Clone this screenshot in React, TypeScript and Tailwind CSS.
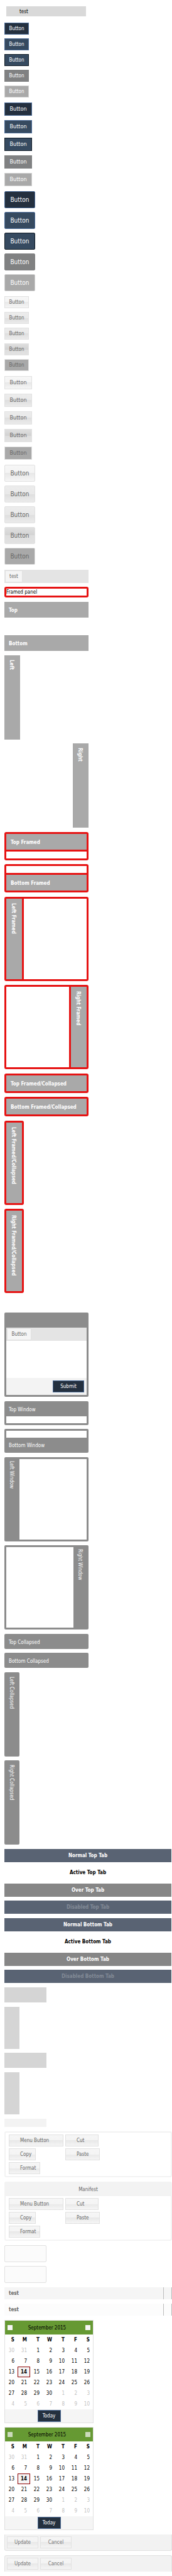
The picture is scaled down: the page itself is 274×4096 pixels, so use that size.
import type { ReactNode } from "react";
import clsx from "clsx";

type Size = "small" | "medium" | "large";

const sizes: Record<Size, string> = {
  small: "h-[19px] w-[39px] text-[8px]",
  medium: "h-[21px] w-[44px] text-[9px]",
  large: "h-[27px] w-[49px] rounded-[2px] text-[10px]",
};

const primary = "border border-[#4a6a96] bg-[#24303f] text-white";

const darkStates = [
  primary,
  "border border-[#4a6a96] bg-[#364a60] text-white",
  "border border-[#0f1a24] bg-[#364a60] text-white",
  "border border-[#808182] bg-[#808182] text-white",
  "border border-[#cfcfcf] bg-[#a9a9a9] text-white",
];

const light =
  "border border-[#e1e1e1] bg-[linear-gradient(#f6f6f6,#f4f4f4_50%,#e8e8e8_50%,#f5f5f5)] text-[#666]";
const lightOver =
  "border border-[#e1e1e1] bg-[linear-gradient(#ececec,#e9e9e9_50%,#dedede_50%,#ebebeb)] text-[#666]";

const lightStates = [
  light,
  lightOver,
  lightOver,
  "border border-[#e1e1e1] bg-[linear-gradient(#dfdfdf,#d2d2d2_50%,#dedede_50%,#e2e2e2)] text-[#666]",
  "border border-[#e1e1e1] bg-[#a9a9a9] text-[#666]",
];

function ButtonGroup({ size, states }: { size: Size; states: string[] }) {
  return (
    <div className={clsx("flex flex-col items-start", size === "medium" ? "gap-[7px]" : "gap-1.5")}>
      {states.map((state, i) => (
        <button
          key={i}
          type="button"
          disabled={i === states.length - 1}
          className={clsx("flex items-center justify-center", sizes[size], state)}
        >
          Button
        </button>
      ))}
    </div>
  );
}

function Pair({ children }: { children?: ReactNode }) {
  return <div className="flex flex-col items-start gap-1.5">{children}</div>;
}

function Toolbar({ label, width }: { label: string; width: string }) {
  return (
    <div className="flex h-[21px] items-center bg-[#e4e4e4] pl-px">
      <button
        type="button"
        className={clsx("h-[19px] border border-[#e1e1e1] bg-[#f5f5f5] text-[8px] text-[#666]", width)}
      >
        {label}
      </button>
    </div>
  );
}

function HeaderBar({ title, className }: { title: string; className: string }) {
  return <div className={clsx("flex items-center text-[8px] text-white", className)}>{title}</div>;
}

function SideHeader({ title, className }: { title: string; className: string }) {
  return (
    <div className={clsx("flex flex-col justify-center text-[8px] text-white [writing-mode:vertical-rl]", className)}>
      {title}
    </div>
  );
}

const frame = "rounded-[3px] border-[3px] border-[#e61313] bg-[#e61313]";
const paneTop = "h-[25px] bg-[#a9a9a9] pt-px pl-[7px] font-bold";
const paneSide = "w-[25px] bg-[#a9a9a9] pt-[7px] pr-0.5 font-bold";

function Tab({ label, tone }: { label: string; tone: string }) {
  return (
    <button
      type="button"
      role="tab"
      className={clsx("h-[21px] w-full text-center text-[8px] font-bold", tone)}
    >
      {label}
    </button>
  );
}

const tabTones: [string, string][] = [
  ["Normal", "bg-[#596373] text-white"],
  ["Active", "bg-white text-black"],
  ["Over", "bg-[#868686] text-white"],
  ["Disabled", "bg-[#596373] text-[#838b97]"],
];

function TabPair({ side, from }: { side: string; from: number }) {
  return (
    <div role="tablist" className="flex flex-col gap-1.5 pr-px">
      {tabTones.slice(from, from + 2).map(([name, tone]) => (
        <Tab key={name} label={`${name} ${side} Tab`} tone={tone} />
      ))}
    </div>
  );
}

const menuItems: [string, string][] = [
  ["Menu Button", "w-[87px]"],
  ["Cut", "w-[53px]"],
  ["Copy", "w-[43px]"],
  ["Paste", "w-[55px]"],
  ["Format", "w-[50px]"],
];

function MenuGroup({ title }: { title?: string }) {
  return (
    <div className="rounded-[3px] border-2 border-[#f3f3f3]">
      {title && (
        <div className="flex h-[21px] items-center justify-center bg-[#f3f3f3] text-[8px] text-[#666]">{title}</div>
      )}
      <div className="grid grid-cols-[87px_1fr] gap-[3px] py-[3px] pl-[5px]">
        {menuItems.map(([label, width]) => (
          <button
            key={label}
            type="button"
            className={clsx("h-[19px] pl-[17px] text-left text-[8px]", light, width)}
          >
            {label}
          </button>
        ))}
      </div>
    </div>
  );
}

function GridHeader({ tone }: { tone: string }) {
  return (
    <div className={clsx("flex h-[19px] border-r border-[#bcbcbc] text-[8px] font-bold text-[#666]", tone)}>
      <div className="flex flex-1 items-center pl-[7px]">test</div>
      <div className="w-[13px] border-l border-[#bcbcbc]" />
    </div>
  );
}

const weekdays = ["S", "M", "T", "W", "T", "F", "S"];
const weeks = Array.from({ length: 6 }, (_, w) =>
  Array.from({ length: 7 }, (_, d) => {
    const n = w * 7 + d - 1;
    if (n < 1) return { day: n + 31, out: true };
    if (n > 30) return { day: n - 30, out: true };
    return { day: n, out: false };
  }),
);

function Calendar({ navTone }: { navTone: string }) {
  return (
    <div className="w-[142px] border border-[#e1e1e1] text-[8px]">
      <div className="flex h-[22px] items-center bg-[#669933] pr-1 pl-1">
        <button type="button" aria-label="Previous month" className={clsx("size-2", navTone)} />
        <button type="button" className="flex-1 pr-1.5 text-center text-black">
          September 2015
        </button>
        <button type="button" aria-label="Next month" className={clsx("size-2", navTone)} />
      </div>
      <table className="w-full table-fixed border-collapse text-right">
        <thead>
          <tr className="h-[17px]">
            {weekdays.map((d, i) => (
              <th key={i} className="p-0 pr-[5px] text-right font-bold">
                {d}
              </th>
            ))}
          </tr>
        </thead>
        <tbody>
          {weeks.map((week, w) => (
            <tr key={w} className="h-[17px]">
              {week.map(({ day, out }, d) => {
                const selected = day === 14;
                return (
                  <td key={d} className={clsx("p-0", out && "text-[#bfbfbf]")}>
                    <div
                      className={clsx(
                        "flex h-[17px] items-center justify-end",
                        selected ? "border border-[#8b0000] bg-[#f5f5f5] pr-1 font-bold" : "pr-[5px]",
                      )}
                    >
                      {day}
                    </div>
                  </td>
                );
              })}
            </tr>
          ))}
        </tbody>
      </table>
      <div className="flex h-[21px] items-center justify-center bg-[#f5f5f5]">
        <button type="button" className={clsx("h-[19px] w-[37px]", primary)}>
          Today
        </button>
      </div>
    </div>
  );
}

function EditorButtons({ className }: { className: string }) {
  return (
    <div className={clsx("flex h-[26px] gap-[3px] border-x border-[#e1e1e1] bg-[#f2f2f2] pt-[3px] pl-[3px]", className)}>
      {["Update", "Cancel"].map((label) => (
        <button key={label} type="button" className={clsx("h-[19px] w-[50px] text-[8px] opacity-90", light)}>
          {label}
        </button>
      ))}
    </div>
  );
}

export default function App() {
  return (
    <main className="bg-white pt-[10px] pb-[7px] pl-[7px] font-['DejaVu_Sans_Condensed','DejaVu_Sans',Tahoma,sans-serif] leading-[11px] text-black">
      <div className="mb-[10px] ml-[3px] flex h-4 w-[127px] items-center bg-[#d9d9d9] pl-[21px] text-[8px]">test</div>

      <section className="mb-2 flex flex-col gap-2">
        <ButtonGroup size="small" states={darkStates} />
        <ButtonGroup size="medium" states={darkStates} />
        <ButtonGroup size="large" states={darkStates} />
        <ButtonGroup size="small" states={lightStates} />
        <ButtonGroup size="medium" states={lightStates} />
        <ButtonGroup size="large" states={lightStates} />
      </section>

      <div className="flex flex-col gap-[7px]">
        <Pair>
          <div className="w-[134px]">
            <Toolbar label="test" width="w-[28px]" />
          </div>
          <div className={clsx("h-[17px] w-[134px] text-[8px]", frame)}>
            <div className="h-[11px] bg-white">Framed panel</div>
          </div>
        </Pair>

        <Pair>
          <div className="w-[134px] pb-[11px]">
            <HeaderBar title="Top" className={paneTop} />
          </div>
          <div className="w-[134px] pt-[11px]">
            <HeaderBar title="Bottom" className={paneTop} />
          </div>
        </Pair>

        <Pair>
          <div className="flex h-[134px] w-[134px]">
            <SideHeader title="Left" className={paneSide} />
          </div>
          <div className="flex h-[134px] w-[134px] justify-end">
            <SideHeader title="Right" className={paneSide} />
          </div>
        </Pair>

        <Pair>
          <div className={clsx("flex w-[134px] flex-col gap-[3px]", frame)}>
            <HeaderBar title="Top Framed" className={paneTop} />
            <div className="h-[11px] bg-white" />
          </div>
          <div className={clsx("flex w-[134px] flex-col gap-[3px]", frame)}>
            <div className="h-[11px] bg-white" />
            <HeaderBar title="Bottom Framed" className={paneTop} />
          </div>
        </Pair>

        <Pair>
          <div className={clsx("flex h-[134px] w-[134px] gap-[3px]", frame)}>
            <SideHeader title="Left Framed" className={paneSide} />
            <div className="flex-1 bg-white" />
          </div>
          <div className={clsx("flex h-[134px] w-[134px] gap-[3px]", frame)}>
            <div className="flex-1 bg-white" />
            <SideHeader title="Right Framed" className={paneSide} />
          </div>
        </Pair>

        <Pair>
          <div className={clsx("w-[134px]", frame)}>
            <HeaderBar title="Top Framed/Collapsed" className={paneTop} />
          </div>
          <div className={clsx("w-[134px]", frame)}>
            <HeaderBar title="Bottom Framed/Collapsed" className={paneTop} />
          </div>
        </Pair>

        <Pair>
          <div className={clsx("flex h-[134px]", frame)}>
            <SideHeader title="Left Framed/Collapsed" className={paneSide} />
          </div>
          <div className={clsx("flex h-[134px]", frame)}>
            <SideHeader title="Right Framed/Collapsed" className={paneSide} />
          </div>
        </Pair>

        <div className="h-[17px]" />

        <div className="flex h-[134px] w-[134px] flex-col rounded-[2px] bg-[#8c8c8c] px-[3px] pt-6 pb-[3px]">
          <Toolbar label="Button" width="w-[39px]" />
          <div className="flex-1 bg-white" />
          <div className="flex h-[27px] items-center justify-end bg-[#f3f3f3] pr-1">
            <button type="button" className={clsx("h-[19px] w-[50px] text-[8px]", primary)}>
              Submit
            </button>
          </div>
        </div>

        <Pair>
          <div className="w-[134px] rounded-[2px] bg-[#8c8c8c] px-[3px] pb-[3px]">
            <HeaderBar title="Top Window" className="h-6 pt-[3px] pl-1" />
            <div className="h-[11px] bg-white" />
          </div>
          <div className="w-[134px] rounded-[2px] bg-[#8c8c8c] px-[3px] pt-[3px]">
            <div className="h-[11px] bg-white" />
            <HeaderBar title="Bottom Window" className="h-6 pt-px pl-1" />
          </div>
        </Pair>

        <Pair>
          <div className="flex h-[134px] w-[134px] rounded-[2px] bg-[#8c8c8c] py-[3px] pr-[3px]">
            <SideHeader title="Left Window" className="w-6 pt-[3px] pr-px" />
            <div className="flex-1 bg-white" />
          </div>
          <div className="flex h-[134px] w-[134px] rounded-[2px] bg-[#8c8c8c] py-[3px] pl-[3px]">
            <div className="flex-1 bg-white" />
            <SideHeader title="Right Window" className="w-6 pt-[3px] pr-[3px]" />
          </div>
        </Pair>

        <Pair>
          <HeaderBar title="Top Collapsed" className="h-6 w-[134px] rounded-[2px] bg-[#8c8c8c] pt-[3px] pl-[7px]" />
          <HeaderBar title="Bottom Collapsed" className="h-6 w-[134px] rounded-[2px] bg-[#8c8c8c] pt-[3px] pl-[7px]" />
        </Pair>

        <Pair>
          <SideHeader title="Left Collapsed" className="h-[134px] w-6 rounded-[2px] bg-[#8c8c8c] pt-[7px] pr-px" />
          <SideHeader title="Right Collapsed" className="h-[134px] w-6 rounded-[2px] bg-[#8c8c8c] pt-[7px] pr-px" />
        </Pair>

        <TabPair side="Top" from={0} />
        <TabPair side="Top" from={2} />
        <TabPair side="Bottom" from={0} />
        <TabPair side="Bottom" from={2} />

        <div className="h-6 w-[67px] bg-[#d5d5d5]" />
        <Pair>
          <div className="h-[67px] w-6 bg-[#d5d5d5]" />
          <div className="h-6 w-[67px] bg-[#d5d5d5]" />
        </Pair>
        <div className="h-[67px] w-6 bg-[#d5d5d5]" />
        <div className="h-[13px] w-[67px] bg-[#f3f3f3]" />

        <MenuGroup />
        <MenuGroup title="Manifest" />

        <Pair>
          <div className="h-[27px] w-[67px] rounded-[2px] border border-[#e1e1e1] bg-[#fbfbfb]" />
          <div className="h-[27px] w-[67px] rounded-[2px] border border-[#e1e1e1] bg-[#fbfbfb]" />
        </Pair>

        <GridHeader tone="bg-[#f5f5f5]" />
        <GridHeader tone="bg-[#fcfcfc]" />

        <Pair>
          <Calendar navTone="bg-[#f5f5f5]" />
          <Calendar navTone="bg-[#cbdabb]" />
        </Pair>

        <EditorButtons className="rounded-b-[3px] border-b" />
        <EditorButtons className="rounded-t-[3px] border-t" />
      </div>
    </main>
  );
}
